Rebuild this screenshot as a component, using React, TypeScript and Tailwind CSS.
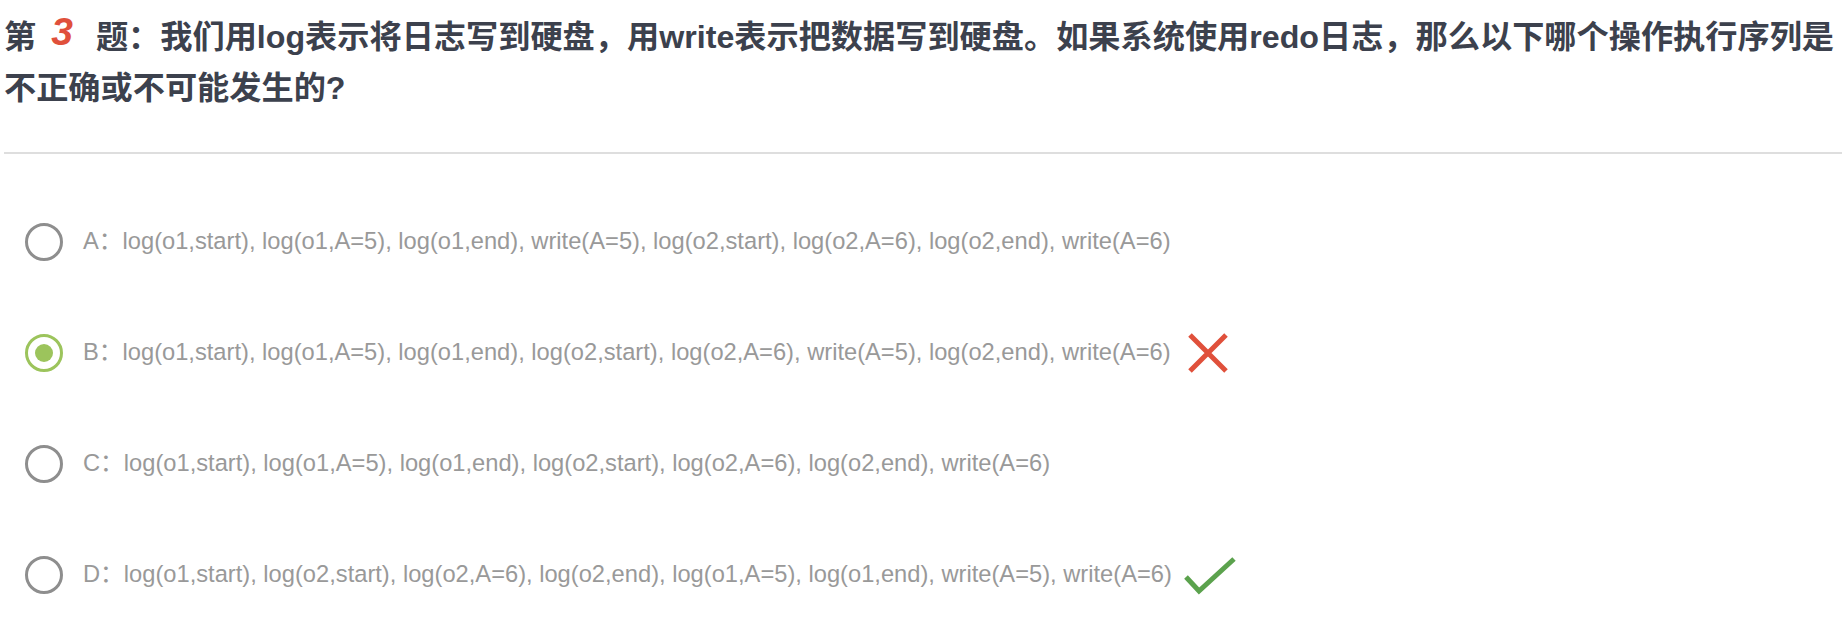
import React from "react"

const options = [
    { key: 'A', text: 'log(o1,start), log(o1,A=5), log(o1,end), write(A=5), log(o2,start), log(o2,A=6), log(o2,end), write(A=6)', selected: false, mark: '' },
    { key: 'B', text: 'log(o1,start), log(o1,A=5), log(o1,end), log(o2,start), log(o2,A=6), write(A=5), log(o2,end), write(A=6)', selected: true, mark: 'wrong' },
    { key: 'C', text: 'log(o1,start), log(o1,A=5), log(o1,end), log(o2,start), log(o2,A=6), log(o2,end), write(A=6)', selected: false, mark: '' },
    { key: 'D', text: 'log(o1,start), log(o2,start), log(o2,A=6), log(o2,end), log(o1,A=5), log(o1,end), write(A=5), write(A=6)', selected: false, mark: 'right' },
]

function Radio({ selected }: { selected: boolean }) {
    if (selected) {
        return (
            <div className="w-[38px] h-[38px] shrink-0 rounded-full border-[3px] border-[#9cc45c] flex items-center justify-center">
                <div className="w-[18px] h-[18px] rounded-full bg-[#9cc45c]" />
            </div>
        )
    }
    return <div className="w-[38px] h-[38px] shrink-0 rounded-full border-[3px] border-[#8e8e8e]" />
}

function WrongMark() {
    return (
        <svg width="42" height="42" viewBox="0 0 42 42" className="ml-[16px] shrink-0">
            <path d="M3 3 L39 39 M39 3 L3 39" stroke="#e0503b" strokeWidth="5" fill="none" />
        </svg>
    )
}

function RightMark() {
    return (
        <svg width="52" height="40" viewBox="0 0 52 40" className="ml-[12px] shrink-0">
            <path d="M2 22 L15 36 L50 4" stroke="#5ba24d" strokeWidth="5" fill="none" />
        </svg>
    )
}

export default function App() {
    return (
        <div className="w-[1842px] h-[620px] overflow-hidden bg-white pl-[4px]" style={{ fontFamily: '"Liberation Sans", "Noto Sans CJK SC", sans-serif' }}>
            <div className="pt-[12px] text-[32.2px] leading-[51px] font-bold text-[#3c414d]">
                第<span className="ml-[15px] mr-[23px] text-[39px] leading-none italic text-[#e0503b] align-[3px]">3</span>题：我们用log表示将日志写到硬盘，用write表示把数据写到硬盘。如果系统使用redo日志，那么以下哪个操作执行序列是
                <br />
                不正确或不可能发生的?
            </div>
            <div className="mt-[38px] h-[2px] bg-[#dedede]" />
            <div className="mt-[32px] flex flex-col">
                {options.map(o => (
                    <div key={o.key} className="h-[111px] flex items-center pl-[21px]">
                        <Radio selected={o.selected} />
                        <div className="ml-[20px] text-[23.7px] text-[#999999] whitespace-nowrap">{o.key}：{o.text}</div>
                        {o.mark === 'wrong' && <WrongMark />}
                        {o.mark === 'right' && <RightMark />}
                    </div>
                ))}
            </div>
        </div>
    )
}
